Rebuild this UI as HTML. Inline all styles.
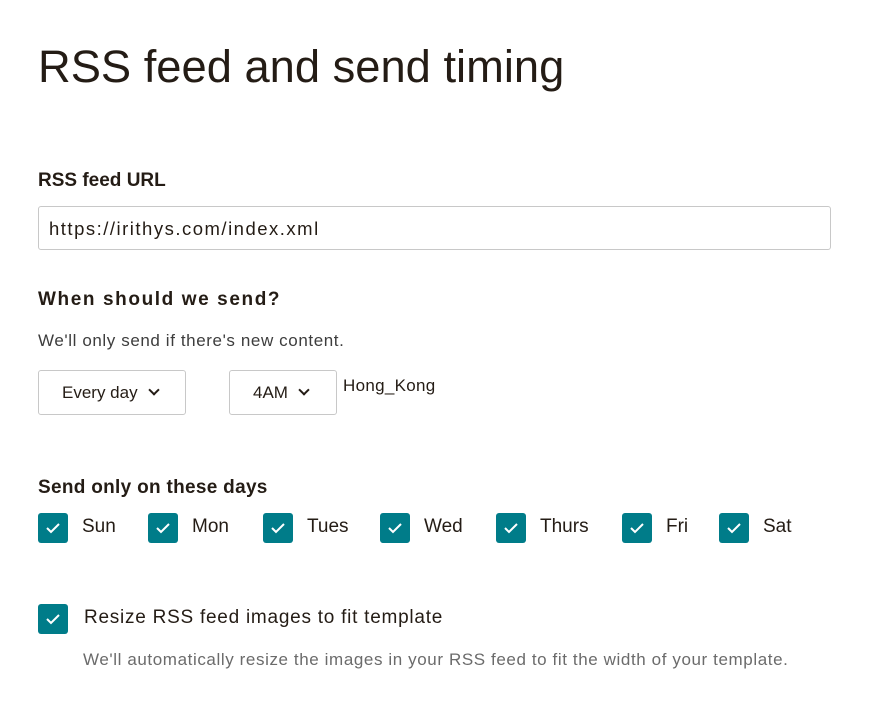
<!DOCTYPE html>
<html><head><style>
body{margin:0;background:#fff;font-family:"Liberation Sans",sans-serif;color:#241c15;width:895px;height:712px;position:relative;overflow:hidden}
.a{position:absolute;white-space:nowrap}
h1{position:absolute;left:38px;top:41px;margin:0;font-weight:normal;font-size:45.3px;letter-spacing:0px}
.lbl{font-size:19px;font-weight:bold}
.box{position:absolute;border:1px solid #c8c8c8;border-radius:3px;background:#fff}
.cb{position:absolute;width:30px;height:30px;background:#007c89;border-radius:3px}
.cb svg{position:absolute;left:7px;top:8px}
.day{position:absolute;font-size:19px;top:516px}
.chev{display:inline-block;width:6px;height:6px;border-right:2px solid #241c15;border-bottom:2px solid #241c15;transform:rotate(45deg);margin-left:12px;position:relative;top:-4px}
</style></head><body>
<h1>RSS feed and send timing</h1>
<div class="a lbl" style="left:38px;top:170px">RSS feed URL</div>
<div class="box" style="left:38px;top:206px;width:791px;height:42px"></div>
<div class="a" style="left:49px;top:218px;font-size:18.5px;letter-spacing:1.5px">https://irithys.com/index.xml</div>
<div class="a lbl" style="left:38px;top:289px;letter-spacing:1.6px">When should we send?</div>
<div class="a" style="left:38px;top:331px;font-size:17px;letter-spacing:0.6px;color:#3d3d3d">We'll only send if there's new content.</div>
<div class="box" style="left:38px;top:370px;width:146px;height:43px"></div>
<div class="a" style="left:62px;top:383px;font-size:17px">Every day<span class="chev"></span></div>
<div class="box" style="left:229px;top:370px;width:106px;height:43px"></div>
<div class="a" style="left:253px;top:383px;font-size:17px">4AM<span class="chev"></span></div>
<div class="a" style="left:343px;top:376px;font-size:17px;letter-spacing:0.3px">Hong_Kong</div>
<div class="a lbl" style="left:38px;top:477px;letter-spacing:0.3px">Send only on these days</div>

<div class="cb" style="left:38px;top:513px"><svg width="16" height="14"><path d="M2 7l4 4 8-8" stroke="#fff" stroke-width="2" fill="none"/></svg></div><div class="day" style="left:82px">Sun</div>
<div class="cb" style="left:148px;top:513px"><svg width="16" height="14"><path d="M2 7l4 4 8-8" stroke="#fff" stroke-width="2" fill="none"/></svg></div><div class="day" style="left:192px">Mon</div>
<div class="cb" style="left:263px;top:513px"><svg width="16" height="14"><path d="M2 7l4 4 8-8" stroke="#fff" stroke-width="2" fill="none"/></svg></div><div class="day" style="left:307px">Tues</div>
<div class="cb" style="left:380px;top:513px"><svg width="16" height="14"><path d="M2 7l4 4 8-8" stroke="#fff" stroke-width="2" fill="none"/></svg></div><div class="day" style="left:424px">Wed</div>
<div class="cb" style="left:496px;top:513px"><svg width="16" height="14"><path d="M2 7l4 4 8-8" stroke="#fff" stroke-width="2" fill="none"/></svg></div><div class="day" style="left:540px">Thurs</div>
<div class="cb" style="left:622px;top:513px"><svg width="16" height="14"><path d="M2 7l4 4 8-8" stroke="#fff" stroke-width="2" fill="none"/></svg></div><div class="day" style="left:666px">Fri</div>
<div class="cb" style="left:719px;top:513px"><svg width="16" height="14"><path d="M2 7l4 4 8-8" stroke="#fff" stroke-width="2" fill="none"/></svg></div><div class="day" style="left:763px">Sat</div>

<div class="cb" style="left:38px;top:604px"><svg width="16" height="14"><path d="M2 7l4 4 8-8" stroke="#fff" stroke-width="2" fill="none"/></svg></div>
<div class="a" style="left:84px;top:607px;font-size:19px;letter-spacing:0.75px">Resize RSS feed images to fit template</div>
<div class="a" style="left:83px;top:650px;font-size:17px;letter-spacing:0.6px;color:#6b6b6b">We'll automatically resize the images in your RSS feed to fit the width of your template.</div>
</body></html>
